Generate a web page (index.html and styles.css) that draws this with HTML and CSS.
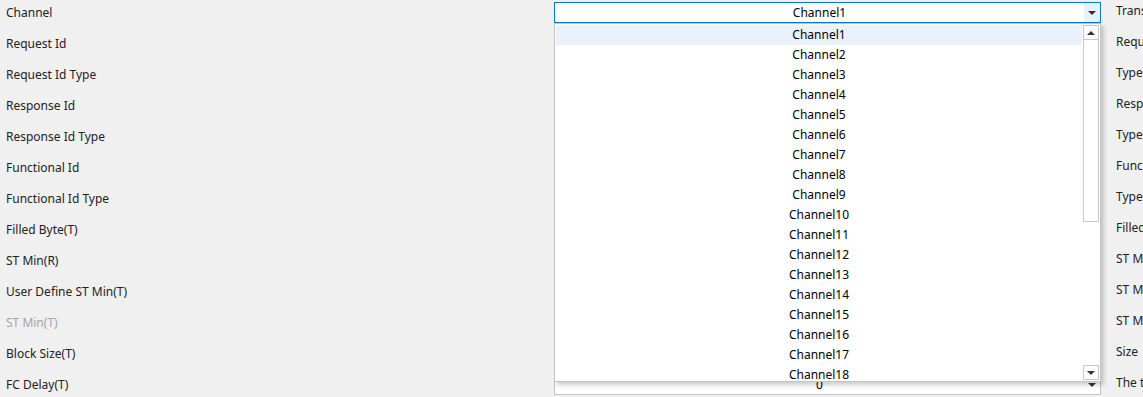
FILE: index.html
```html
<html>

<head>
  <meta charset="utf-8">
  <link rel="stylesheet" href="styles.css">
</head>

<body>
  <div class="form">
    <div class="label">Channel</div>
    <div class="combo active"><span class="value">Channel1</span><span class="btn"><i class="arrow"></i></span></div>
    <div class="label right">Transmit Mode</div>

    <div class="label">Request Id</div>
    <div class="combo"><span class="value"></span><span class="btn"><i class="arrow"></i></span></div>
    <div class="label right">Request Id</div>

    <div class="label">Request Id Type</div>
    <div class="combo"><span class="value"></span><span class="btn"><i class="arrow"></i></span></div>
    <div class="label right">Type</div>

    <div class="label">Response Id</div>
    <div class="combo"><span class="value"></span><span class="btn"><i class="arrow"></i></span></div>
    <div class="label right">Response Id</div>

    <div class="label">Response Id Type</div>
    <div class="combo"><span class="value"></span><span class="btn"><i class="arrow"></i></span></div>
    <div class="label right">Type</div>

    <div class="label">Functional Id</div>
    <div class="combo"><span class="value"></span><span class="btn"><i class="arrow"></i></span></div>
    <div class="label right">Functional Id</div>

    <div class="label">Functional Id Type</div>
    <div class="combo"><span class="value"></span><span class="btn"><i class="arrow"></i></span></div>
    <div class="label right">Type</div>

    <div class="label">Filled Byte(T)</div>
    <div class="combo"><span class="value"></span><span class="btn"><i class="arrow"></i></span></div>
    <div class="label right">Filled Byte</div>

    <div class="label">ST Min(R)</div>
    <div class="combo"><span class="value"></span><span class="btn"><i class="arrow"></i></span></div>
    <div class="label right">ST Min of receive</div>

    <div class="label">User Define ST Min(T)</div>
    <div class="combo"><span class="value"></span><span class="btn"><i class="arrow"></i></span></div>
    <div class="label right">ST Min user defined</div>

    <div class="label disabled">ST Min(T)</div>
    <div class="combo"><span class="value"></span><span class="btn"><i class="arrow"></i></span></div>
    <div class="label right">ST Min of transmit</div>

    <div class="label">Block Size(T)</div>
    <div class="combo"><span class="value"></span><span class="btn"><i class="arrow"></i></span></div>
    <div class="label right">Size</div>

    <div class="label">FC Delay(T)</div>
    <div class="combo"><span class="value">0</span><span class="btn"><i class="arrow"></i></span></div>
    <div class="label right">The time of flow control delay</div>

    <div class="dropdown">
      <ul class="items">
        <li class="selected">Channel1</li>
        <li>Channel2</li>
        <li>Channel3</li>
        <li>Channel4</li>
        <li>Channel5</li>
        <li>Channel6</li>
        <li>Channel7</li>
        <li>Channel8</li>
        <li>Channel9</li>
        <li>Channel10</li>
        <li>Channel11</li>
        <li>Channel12</li>
        <li>Channel13</li>
        <li>Channel14</li>
        <li>Channel15</li>
        <li>Channel16</li>
        <li>Channel17</li>
        <li>Channel18</li>
        <li>Channel19</li>
      </ul>
      <div class="scrollbar">
        <div class="sb-btn"><i class="arrow up"></i></div>
        <div class="sb-thumb"></div>
        <div class="sb-track"></div>
        <div class="sb-btn"><i class="arrow"></i></div>
      </div>
    </div>
  </div>
</body>

</html>
```

FILE: styles.css
```css
body {
  margin: 0;
  background: #f0f0f0;
  color: #222;
  font-family: "Noto Sans", "Open Sans", sans-serif;
  font-size: 12px;
  overflow: hidden;
}

.form {
  position: relative;
  display: grid;
  grid-template-columns: 554px 547px 1fr;
  grid-auto-rows: 31px;
  width: 1143px;
}

.label {
  margin-top: 2px;
  padding-left: 6px;
  line-height: 21px;
  white-space: nowrap;
}

.label.disabled {
  color: #a6a6a6;
}

.label.right {
  margin-top: 0;
  padding-left: 15px;
  overflow: hidden;
}

.combo {
  margin-top: 2px;
  height: 21px;
  box-sizing: border-box;
  display: flex;
  border: 1px solid #c4c4c4;
  background: linear-gradient(#fafafa, #ffffff);
  color: #000;
}

.combo.active {
  border-color: #0078d7;
  background: #fff;
}

.value {
  flex: 1;
  text-align: center;
  line-height: 19px;
}

.btn {
  width: 16px;
  display: flex;
  align-items: center;
  justify-content: center;
}

.combo.active .btn {
  background: #e5f1fb;
}

.arrow {
  width: 0;
  height: 0;
  border-left: 4px solid transparent;
  border-right: 4px solid transparent;
  border-top: 4px solid #333;
}

.arrow.up {
  border-top: none;
  border-bottom: 4px solid #333;
}

.dropdown {
  position: absolute;
  top: 23px;
  left: 554px;
  width: 547px;
  height: 359px;
  box-sizing: border-box;
  display: flex;
  padding: 1px;
  border: 1px solid #c4c4c4;
  background: #fff;
  box-shadow: 3px 3px 4px rgba(0, 0, 0, 0.18);
  color: #000;
}

.items {
  flex: 1;
  margin: 0;
  padding: 0;
  list-style: none;
  overflow: hidden;
}

.items li {
  height: 20px;
  line-height: 20px;
  text-align: center;
}

.items li.selected {
  background: #e9f2fa;
}

.scrollbar {
  width: 16px;
  margin-left: 1px;
  display: flex;
  flex-direction: column;
}

.sb-btn {
  height: 15px;
  box-sizing: border-box;
  border: 1px solid #c8c8c8;
  display: flex;
  align-items: center;
  justify-content: center;
}

.sb-thumb {
  height: 182px;
  box-sizing: border-box;
  border: 1px solid #c8c8c8;
  border-top: none;
}

.sb-track {
  flex: 1;
}
```
